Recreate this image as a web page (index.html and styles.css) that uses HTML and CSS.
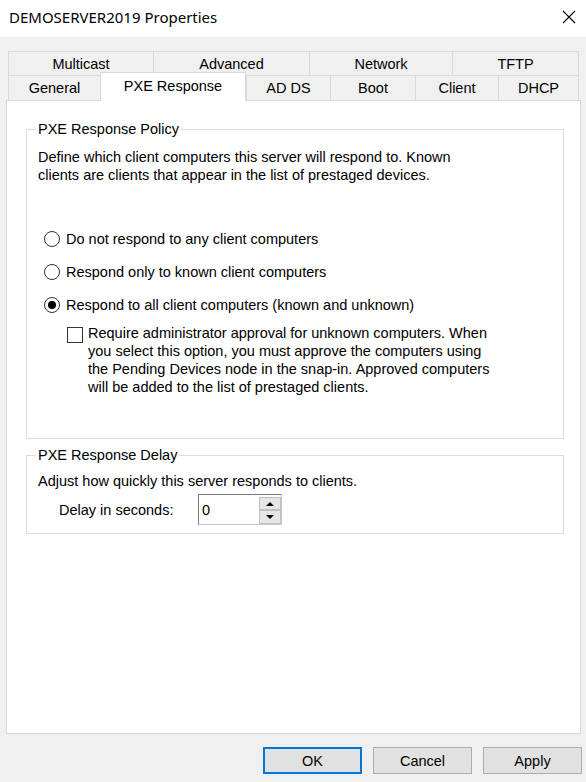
FILE: index.html
```html
<!DOCTYPE html>
<html lang="en">
<head>
    <meta charset="UTF-8">
    <meta name="viewport" content="width=device-width, initial-scale=1.0">
    <title>DEMOSERVER2019 Properties</title>
    <link rel="stylesheet" href="styles.css">
</head>
<body>

<div class="dialog">
    <div class="titlebar">
        <span class="title">DEMOSERVER2019 Properties</span>
        <button class="close" title="Close">
            <svg width="14" height="14" viewBox="0 0 14 14"><path d="M1 1L13 13M13 1L1 13" stroke="#000" stroke-width="1.1" fill="none"/></svg>
        </button>
    </div>

    <div class="tabs">
        <div class="tab-row">
            <div class="tab tab-multicast">Multicast</div>
            <div class="tab tab-advanced">Advanced</div>
            <div class="tab tab-network">Network</div>
            <div class="tab tab-tftp">TFTP</div>
        </div>
        <div class="tab-row front">
            <div class="tab tab-general">General</div>
            <div class="tab tab-pxe selected">PXE Response</div>
            <div class="tab tab-adds">AD DS</div>
            <div class="tab tab-boot">Boot</div>
            <div class="tab tab-client">Client</div>
            <div class="tab tab-dhcp">DHCP</div>
        </div>
    </div>

    <div class="page">
        <fieldset class="group policy">
            <legend>PXE Response Policy</legend>
            <p class="desc">Define which client computers this server will respond to. Known<br>clients are clients that appear in the list of prestaged devices.</p>
            <div class="options">
                <label class="option"><input type="radio" name="policy"> <span>Do not respond to any client computers</span></label>
                <label class="option"><input type="radio" name="policy"> <span>Respond only to known client computers</span></label>
                <label class="option"><input type="radio" name="policy" checked> <span>Respond to all client computers (known and unknown)</span></label>
                <label class="approval"><input type="checkbox"> <span>Require administrator approval for unknown computers. When<br>you select this option, you must approve the computers using<br>the Pending Devices node in the snap-in. Approved computers<br>will be added to the list of prestaged clients.</span></label>
            </div>
        </fieldset>

        <fieldset class="group delay">
            <legend>PXE Response Delay</legend>
            <p class="desc">Adjust how quickly this server responds to clients.</p>
            <div class="delay-row">
                <span class="delay-label">Delay in seconds:</span>
                <div class="spinner">
                    <input type="text" value="0">
                    <div class="spin-buttons">
                        <button class="spin-up"><span class="arrow up"></span></button>
                        <button class="spin-down"><span class="arrow down"></span></button>
                    </div>
                </div>
            </div>
        </fieldset>
    </div>

    <div class="buttons">
        <button class="btn default">OK</button>
        <button class="btn">Cancel</button>
        <button class="btn">Apply</button>
    </div>
</div>

</body>
</html>
```

FILE: styles.css
```css
body {
    font-family: "Liberation Sans", Arial, sans-serif;
    font-size: 14.5px;
    line-height: 18px;
    color: #000;
    background-color: #f0f0f0;
    margin: 0;
}
.dialog {
    width: 586px;
    height: 782px;
    display: flex;
    flex-direction: column;
}
.titlebar {
    height: 37px;
    flex: none;
    background: #fff;
    display: flex;
    align-items: center;
    justify-content: space-between;
    padding: 0 10px 3px 9px;
    box-sizing: border-box;
}
.title {
    font-family: "Noto Sans", sans-serif;
    font-size: 15px;
}
.close {
    border: none;
    background: none;
    padding: 0;
    width: 14px;
    height: 14px;
    display: flex;
}

/* tab strip */
.tabs {
    flex: none;
    margin-top: 14px;
    padding-left: 8px;
}
.tab-row {
    display: flex;
    align-items: flex-start;
    height: 24px;
}
.tab-row.front {
    height: 25px;
}
.tab {
    box-sizing: border-box;
    height: 100%;
    display: flex;
    align-items: center;
    justify-content: center;
    border-top: 1px solid #d9d9d9;
    border-left: 1px solid #d9d9d9;
    background: #f0f0f0;
}
.tab:last-child {
    border-right: 1px solid #d9d9d9;
}
.tab.selected {
    height: 29px;
    margin-top: -3px;
    background: #fff;
    border-right: 1px solid #d9d9d9;
    position: relative;
    z-index: 1;
    padding-bottom: 2px;
}
.tab-multicast { width: 145px; }
.tab-advanced { width: 156px; }
.tab-network { width: 143px; }
.tab-tftp { width: 127px; }
.tab-general { width: 92px; }
.tab-pxe { width: 146px; }
.tab-adds { width: 84px; }
.tab-boot { width: 85px; }
.tab-client { width: 83px; }
.tab-dhcp { width: 81px; }

/* tab page */
.page {
    flex: 1;
    margin: 0 5px 0 6px;
    box-sizing: border-box;
    background: #fff;
    border: 1px solid #d9d9d9;
    padding: 19px 16px 0 19px;
}
.group {
    margin: 0;
    min-width: 0;
    border: 1px solid #dcdcdc;
    padding: 0 11px;
}
.group legend {
    padding: 0 2px;
    margin-left: -2px;
}
.desc {
    margin: 0;
    white-space: nowrap;
}
.policy {
    padding-bottom: 42px;
}
.policy .desc {
    margin-top: 10px;
}
.options {
    margin-top: 46px;
    margin-left: 6px;
    display: flex;
    flex-direction: column;
    gap: 15px;
}
.option {
    display: flex;
    align-items: center;
    gap: 6px;
}
.option input {
    appearance: none;
    margin: 0;
    width: 16px;
    height: 16px;
    border: 1px solid #333;
    border-radius: 50%;
    background: #fff;
    box-sizing: border-box;
    display: grid;
    place-content: center;
}
.option input:checked::before {
    content: "";
    width: 8px;
    height: 8px;
    border-radius: 50%;
    background: #000;
}
.approval {
    display: flex;
    align-items: flex-start;
    gap: 5px;
    margin-top: -5px;
    margin-left: 23px;
    white-space: nowrap;
}
.approval input {
    appearance: none;
    margin: 3px 0 0;
    width: 16px;
    height: 16px;
    border: 1px solid #333;
    background: #fff;
    box-sizing: border-box;
}

/* delay group */
.delay {
    margin-top: 7px;
    padding-bottom: 8px;
}
.delay .desc {
    margin-top: 8px;
}
.delay-row {
    display: flex;
    align-items: center;
    margin-top: 4px;
    padding-left: 21px;
}
.delay-label {
    width: 139px;
}
.spinner {
    display: flex;
    width: 84px;
    height: 31px;
    box-sizing: border-box;
    border: 1px solid #c8c8c8;
    border-top-color: #7a7a7a;
    border-left-color: #7a7a7a;
    background: #fff;
}
.spinner input {
    width: 60px;
    box-sizing: border-box;
    border: none;
    padding: 0 0 0 3px;
    font: inherit;
    outline: none;
}
.spin-buttons {
    display: flex;
    flex-direction: column;
    padding: 2px 0 0 0;
}
.spin-buttons button {
    width: 22px;
    height: 13px;
    padding: 0;
    border: 1px solid #c0c0c0;
    background: #e6e6e6;
    display: flex;
    align-items: center;
    justify-content: center;
}
.spin-buttons .spin-down {
    height: 14px;
}
.arrow {
    width: 0;
    height: 0;
    border-left: 4px solid transparent;
    border-right: 4px solid transparent;
}
.arrow.up {
    border-bottom: 4px solid #000;
}
.arrow.down {
    border-top: 4px solid #000;
}

/* dialog buttons */
.buttons {
    flex: none;
    display: flex;
    justify-content: flex-end;
    gap: 11px;
    margin: 13px 4px 8px 0;
}
.btn {
    width: 99px;
    height: 27px;
    box-sizing: border-box;
    border: 1px solid #adadad;
    background: #e1e1e1;
    font: inherit;
    color: #000;
    padding: 0;
}
.btn.default {
    border: 2px solid #0078d7;
}
```
